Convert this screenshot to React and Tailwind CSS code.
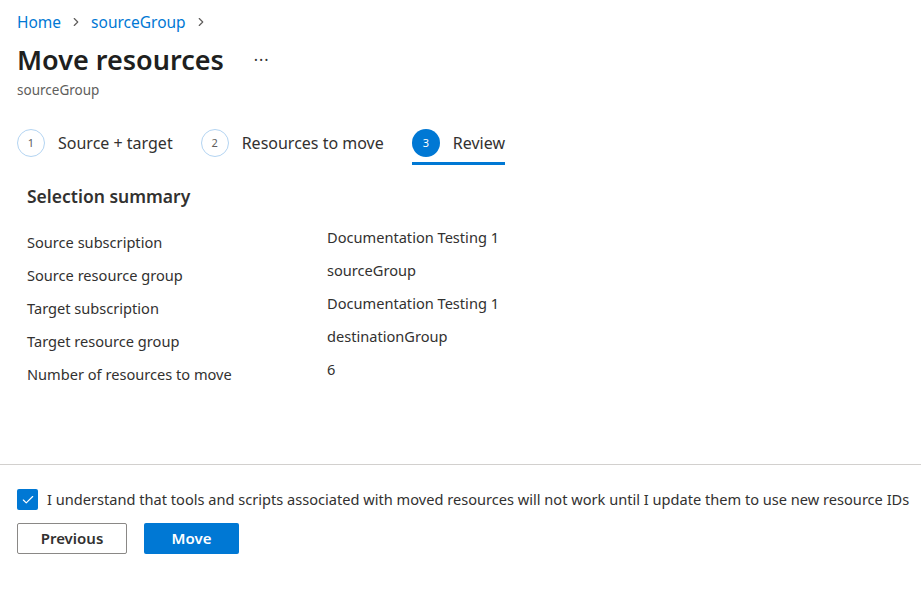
import { Check, ChevronRight } from "lucide-react";

const rows = [
  ["Source subscription", "Documentation Testing 1"],
  ["Source resource group", "sourceGroup"],
  ["Target subscription", "Documentation Testing 1"],
  ["Target resource group", "destinationGroup"],
  ["Number of resources to move", "6"],
];

const steps = [
  { n: 1, label: "Source + target" },
  { n: 2, label: "Resources to move" },
  { n: 3, label: "Review", active: true },
];

export default function App() {
  return (
    <div className="w-[921px] h-[590px] bg-white text-[#323130] font-['Noto_Sans',sans-serif] overflow-hidden">
      <div className="px-[17px]">
        <nav className="flex items-center gap-[8px] pt-[11px] text-[15.5px] text-[#0078d4] leading-[22px]">
          <span>Home</span>
          <ChevronRight size={14} className="text-[#605e5c]" />
          <span>sourceGroup</span>
          <ChevronRight size={14} className="text-[#605e5c]" />
        </nav>

        <div className="flex items-center mt-[10px]">
          <h1 className="text-[27px] font-semibold leading-[34px] text-[#201f1e]">Move resources</h1>
          <span className="ml-[30px] text-[16px] tracking-[1px] text-[#323130]">···</span>
        </div>
        <div className="text-[13.5px] text-[#605e5c] leading-[18px] mt-[4px]">sourceGroup</div>

        <div className="flex items-center mt-[22px] h-[44px]">
          {steps.map((s) => (
            <div
              key={s.n}
              className={
                s.active
                  ? "flex items-center gap-[13px] h-full border-b-[3px] border-[#0078d4] pt-[3px]"
                  : "flex items-center gap-[13px] h-full mr-[28px] border-b-[3px] border-transparent pt-[3px]"
              }
            >
              <span
                className={
                  s.active
                    ? "w-[28px] h-[28px] rounded-full bg-[#0078d4] text-white text-[11px] flex items-center justify-center"
                    : "w-[28px] h-[28px] rounded-full border border-[#b3d4f2] text-[#605e5c] text-[11px] flex items-center justify-center"
                }
              >
                {s.n}
              </span>
              <span className="text-[16px] text-[#323130]">{s.label}</span>
            </div>
          ))}
        </div>
      </div>

      <div className="px-[27px] pt-[19px]">
        <h2 className="text-[17.5px] font-semibold text-[#323130] leading-[24px]">Selection summary</h2>
        <div className="mt-[21px] flex flex-col">
          {rows.map(([k, v]) => (
            <div key={k} className="grid grid-cols-[300px_1fr] h-[33px] text-[14.6px] leading-[20px]">
              <span className="pt-[3px]">{k}</span>
              <span className="-mt-[2px]">{v}</span>
            </div>
          ))}
        </div>
      </div>

      <div className="mt-[70px] border-t border-[#d2d0ce]" />

      <div className="px-[17px] pt-[24px]">
        <label className="flex items-center gap-[9px]">
          <span className="w-[21px] h-[21px] shrink-0 rounded-[2px] bg-[#0078d4] flex items-center justify-center">
            <Check size={14} strokeWidth={2} className="text-white" />
          </span>
          <span className="text-[14.6px] whitespace-nowrap text-[#323130]">
            I understand that tools and scripts associated with moved resources will not work until I update them to use new resource IDs
          </span>
        </label>
        <div className="flex gap-[17px] mt-[12px]">
          <button className="w-[110px] h-[31px] border border-[#8a8886] rounded-[2px] text-[15px] font-semibold text-[#323130]">
            Previous
          </button>
          <button className="w-[95px] h-[31px] rounded-[2px] bg-[#0078d4] text-[15px] font-semibold text-white">
            Move
          </button>
        </div>
      </div>
    </div>
  );
}
